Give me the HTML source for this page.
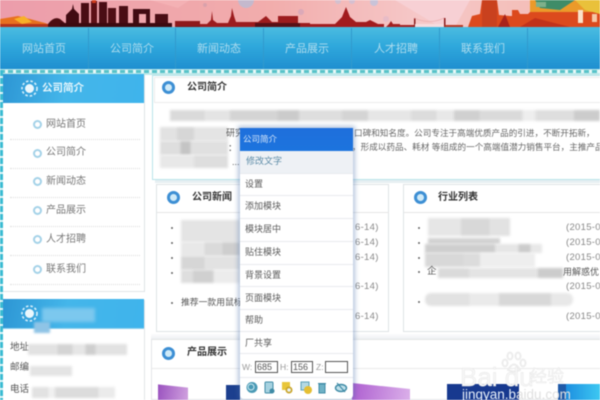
<!DOCTYPE html>
<html><head><meta charset="utf-8">
<style>
html,body{margin:0;padding:0;background:#fff}
#r{position:relative;width:600px;height:400px;overflow:hidden;background:#fff;font-family:"Liberation Sans","Noto Sans CJK SC",sans-serif;filter:blur(.65px)}
#r div,#r span{position:absolute;white-space:nowrap}
.nav{top:42px;font-size:11px;line-height:14px;color:#aedcee}
.sep{top:28px;width:1px;height:41px;background:#3199cc}
.li{left:46px;font-size:10px;line-height:12px;color:#777}
.dot{width:9px;height:9px;border-radius:50%;background:#fff;border:2px solid #a4d2e8;box-sizing:border-box;left:33px}
.ln{left:10px;width:130px;height:0;border-top:1px dotted #ddd}
.box{background:#fff;border:1px solid #dfe3e5;box-sizing:border-box}
.ic{width:13px;height:13px;border-radius:50%;background:#cfeaf8;border:3.5px solid #3d8fd4;box-sizing:border-box}
.t{font-size:10px;font-weight:bold;color:#333;line-height:12px}
.g{background:#d8d8d8;filter:blur(1.4px)}
.d{width:2px;height:2px;background:#666;border-radius:50%}
.date{font-size:9.5px;color:#888;line-height:12px;letter-spacing:.3px}
.tx{font-size:9.5px;color:#555;line-height:12px}
.m{left:245px;font-size:9px;line-height:11px;color:#5a5a5a}
.hr{left:240px;width:113px;height:1px;background:#e8ebee}
.inp{height:12px;border:1px solid #555;box-sizing:border-box;background:#fff;font-size:9px;line-height:10px;color:#555;top:361px;padding-left:1px}
</style></head><body>
<div id="r">
<svg style="position:absolute;left:0;top:0" width="600" height="29" viewBox="0 0 600 29">
<defs><linearGradient id="b" x1="0" x2="1" y1="0" y2="0"><stop offset="0" stop-color="#ec9dab"/><stop offset=".45" stop-color="#f2adac"/><stop offset=".7" stop-color="#f6c8c8"/><stop offset="1" stop-color="#f3b9b0"/></linearGradient></defs>
<rect width="600" height="29" fill="url(#b)"/>
<polygon points="150,0 190,0 178,8" fill="#f4b1b4"/>
<polygon points="395,0 470,0 455,27 440,27" fill="#f7d0d4"/>
<polygon points="0,27 0,19 18,16 30,19 45,23 55,27" fill="#e8701f"/>
<polygon points="14,19 24,16 32,22 22,24" fill="#f8b027"/>
<polygon points="0,24 50,24 62,27 0,27" fill="#b5341c"/>
<path d="M48,24 Q54,16 60,19 L66,24 L66,27 L48,27Z" fill="#4d0d12"/>
<path d="M66,15 L72,9 L73,4 L74,9 L79,14 L79,27 L66,27Z" fill="#420b12"/>
<rect x="81" y="3" width="8" height="24" fill="#4a0d14"/>
<rect x="91" y="1" width="6" height="26" fill="#5c1016"/><rect x="92" y="0" width="4" height="3" fill="#d23d1f"/>
<rect x="99" y="2" width="8" height="25" fill="#4a0d14"/>
<rect x="108" y="8" width="8" height="19" fill="#500e14"/>
<rect x="119" y="6" width="9" height="21" fill="#4a0d14"/>
<path d="M133,9 H150 V27 H146 V14 H139 V27 H133Z" fill="#420b12"/>
<rect x="155" y="14" width="13" height="13" fill="#4a0d14"/>
<rect x="60" y="23" width="112" height="4" fill="#3d0a10"/>
<path d="M175,21 H200 V27 H175Z" fill="#8e1a1c"/>
<path d="M176,26 H300 V27 H176Z" fill="#7a1518"/>
<path d="M200,24 H207 L211,20 L212,11 L213,20 L217,23 H228 L231,16 L232,8 L234,16 L236,22 H258 L266,16 L272,22 H278 V16 H298 V23 H310 V27 H200Z" fill="#9c1c1e"/>
<path d="M255,23 H300 V27 H255Z" fill="#581016"/>
<path d="M310,24 H335 L342,17 L346,7 L350,17 L356,22 H366 L370,20 L378,24 H384 V27 H310Z" fill="#a21c1e"/>
<path d="M389,24 L391,21 L393,24 H400 V27 H386Z" fill="#a32020"/>
<rect x="414" y="18" width="1.5" height="9" fill="#8a1b1b"/><rect x="444" y="18" width="1.5" height="9" fill="#8a1b1b"/>
<rect x="400" y="25" width="14" height="2" fill="#a32020"/><rect x="445" y="25" width="18" height="2" fill="#b93a24"/>
<path d="M414,18 Q430,25 444,18" fill="none" stroke="#e9a3a3" stroke-width=".6"/>
<path d="M415,24 H444 V27 H415Z" fill="#f7dcdf"/>
<path d="M468,27 L472,16 L480,14 L482,0 H497 L499,15 L510,16 H512 V10 L518,10 L520,14 H528 L534,8 L600,0 V27Z" fill="#dc4a1d"/>
<rect x="482" y="0" width="15" height="27" fill="#c9411e"/>
<rect x="530" y="0" width="70" height="12" fill="#eb9a2a"/>
<polygon points="535,0 575,0 560,10 540,8" fill="#3f8c68"/>
<polygon points="575,0 600,0 600,14 585,10" fill="#e9c13b"/>
<rect x="536" y="2" width="10" height="5" fill="#7db08a"/>
<rect x="578" y="10" width="5" height="13" fill="#fbe1c9"/><rect x="592" y="14" width="5" height="8" fill="#f6c7a5"/>
<path d="M505,14 L510,27 L498,27Z" fill="#a8231b"/><path d="M535,18 L570,27 L520,27Z" fill="#c1321a"/>
<circle cx="246" cy="0" r="8" fill="#b9bdd6" opacity=".8"/><circle cx="374" cy="2" r="4" fill="#c9c3d8"/><circle cx="352" cy="1" r="3" fill="#d6bfd0"/><circle cx="338" cy="1" r="3" fill="#d3c0cf"/><circle cx="301" cy="12" r="3" fill="#dca9b8"/><circle cx="205" cy="5" r="2" fill="#d9a1ab"/><circle cx="386" cy="19" r="3" fill="#e7bcc7"/>
</svg>
<div style="left:0;top:27px;width:600px;height:42px;background:linear-gradient(#4bbce0,#2fa8dc 45%,#1f8fd0)"></div>
<div class="sep" style="left:88px"></div><div class="sep" style="left:175px"></div><div class="sep" style="left:263px"></div><div class="sep" style="left:351px"></div><div class="sep" style="left:439px"></div><div class="sep" style="left:527px"></div>
<div class="nav" style="left:22px">网站首页</div><div class="nav" style="left:110px">公司简介</div><div class="nav" style="left:197px">新闻动态</div><div class="nav" style="left:285px">产品展示</div><div class="nav" style="left:374px">人才招聘</div><div class="nav" style="left:461px">联系我们</div>
<div style="left:0;top:69px;width:600px;height:6px;background:#bfe9ea"></div>
<div style="left:0;top:70px;width:600px;height:3px;background:repeating-linear-gradient(90deg,#58c3c9 0 5px,#e8f8f8 5px 8px)"></div>
<div style="left:0;top:70px;width:3px;height:330px;background:repeating-linear-gradient(#3abbd2 0 6px,#dff4f6 6px 8px)"></div>
<div style="left:3px;top:75px;width:141px;height:288px;background:#fff"></div>
<div style="left:144px;top:75px;width:1px;height:217px;background:#dfe3e5"></div>
<div style="left:3px;top:74px;width:141px;height:29px;background:linear-gradient(100deg,#2d96d4,#44b6ea 45%,#3fb4ec)"></div>
<svg style="position:absolute;left:20px;top:79px" width="19" height="19" viewBox="0 0 19 19"><circle cx="9.5" cy="9.5" r="4.5" fill="#eaf7fd"/><circle cx="9.5" cy="9.5" r="7.5" fill="none" stroke="#d8f0fb" stroke-width="1.6" stroke-dasharray="2.5 2"/></svg>
<div style="left:42px;top:81px;font-size:10.5px;line-height:14px;font-weight:bold;color:#e6f6fc">公司简介</div>
<div class="dot" style="top:120px"></div><div class="li" style="top:119px">网站首页</div>
<div class="ln" style="top:139px"></div>
<div class="dot" style="top:149px"></div><div class="li" style="top:147px">公司简介</div>
<div class="ln" style="top:168px"></div>
<div class="dot" style="top:177px"></div><div class="li" style="top:176px">新闻动态</div>
<div class="ln" style="top:197px"></div>
<div class="dot" style="top:206px"></div><div class="li" style="top:205px">产品展示</div>
<div class="ln" style="top:226px"></div>
<div class="dot" style="top:235px"></div><div class="li" style="top:234px">人才招聘</div>
<div class="ln" style="top:255px"></div>
<div class="dot" style="top:265px"></div><div class="li" style="top:264px">联系我们</div>
<div class="ln" style="top:284px"></div>
<div style="left:3px;top:291px;width:141px;height:1px;background:#e2e5e7"></div>
<div style="left:3px;top:299px;width:141px;height:29px;background:linear-gradient(100deg,#2d96d4,#44b6ea 45%,#3fb4ec);border-bottom:1px solid #8fd0ee"></div>
<svg style="position:absolute;left:20px;top:304px" width="19" height="19" viewBox="0 0 19 19"><circle cx="9.5" cy="9.5" r="4.5" fill="#eaf7fd"/><circle cx="9.5" cy="9.5" r="7.5" fill="none" stroke="#d8f0fb" stroke-width="1.6" stroke-dasharray="2.5 2"/></svg>
<div style="left:42px;top:308px;width:53px;height:14px;background:#7cc8ee;filter:blur(1.5px)"></div>
<div style="left:34px;top:322px;width:16px;height:11px;background:#8fc4e6;filter:blur(1px)"></div>
<div style="left:144px;top:300px;width:1px;height:100px;background:#e2e5e7"></div>
<div class="tx" style="left:10px;top:342px">地址</div><div class="g" style="left:28px;top:344px;width:99px;height:11px;background:linear-gradient(90deg,#e2e2e2 0 30%,#d4d4d4 30% 45%,#e6e6e6 45% 58%,#cecece 58% 68%,#e2e2e2 68%)"></div>
<div class="tx" style="left:10px;top:362px">邮编</div><div class="g" style="left:30px;top:366px;width:42px;height:10px;background:#e4e4e4"></div>
<div class="tx" style="left:10px;top:384px">电话</div><div class="g" style="left:32px;top:387px;width:83px;height:11px;background:linear-gradient(90deg,#e2e2e2 0 20%,#f0f0f0 20% 28%,#dcdcdc 28% 80%,#ebebeb 80%)"></div>
<div style="left:152px;top:75px;width:448px;height:105px;background:#fff;border:1px solid #b9e4ea;border-right:0;box-sizing:border-box"></div>
<div style="left:154px;top:77px;width:446px;height:26px;border:1px solid #ececec;border-right:0;box-sizing:border-box;background:#fff"></div>
<div class="ic" style="left:162px;top:81px"></div>
<div class="t" style="left:187px;top:82px">公司简介</div>
<div class="g" style="left:170px;top:110px;width:430px;height:11px;background:linear-gradient(90deg,#dadada 0 8%,#e4e4e4 8% 14%,#d4d4d4 14% 25%,#cbcbcb 25% 30%,#dedede 30% 40%,#d4d4d4 40% 46%,#e6e6e6 46% 56%,#dcdcdc 56% 62%,#e8e8e8 62% 66%,#d0d0d0 66% 72%,#dadada 72% 82%,#eeeeee 82% 85%,#dedede 85% 94%,#cccccc 94%)"></div>
<div class="g" style="left:160px;top:127px;width:68px;height:14px;background:linear-gradient(90deg,#e2e2e2 0 25%,#d6d6d6 25% 50%,#e4e4e4 50%)"></div>
<div class="g" style="left:160px;top:141px;width:68px;height:14px;background:linear-gradient(90deg,#dedede 0 30%,#c4c4c4 30% 45%,#e0e0e0 45%)"></div>
<div class="g" style="left:160px;top:155px;width:68px;height:13px;background:linear-gradient(90deg,#e8e8e8 0 50%,#dedede 50%)"></div>
<div class="tx" style="left:226px;top:127px;font-size:9px">研究</div>
<div class="tx" style="left:228px;top:142px;font-size:9px">：</div>
<div class="tx" style="left:232px;top:156px;font-size:9px">...</div>
<div class="tx" style="left:354px;top:127px;font-size:8.6px;color:#666">口碑和知名度。公司专注于高端优质产品的引进，不断开拓新，</div>
<div class="tx" style="left:352px;top:141px;font-size:8.6px;color:#666">，形成以药品、耗材 等组成的一个高端值潜力销售平台，主推产品有</div>
<div style="left:155px;top:180px;width:445px;height:3px;background:#e6eff2"></div>
<div class="box" style="left:156px;top:184px;width:233px;height:148px"></div>
<div style="left:157px;top:212px;width:232px;height:1px;background:#e6e6e6"></div>
<div class="ic" style="left:167px;top:191px"></div>
<div class="t" style="left:192px;top:192px">公司新闻</div>
<div class="d" style="left:171px;top:227px"></div><div class="d" style="left:171px;top:242px"></div><div class="d" style="left:171px;top:257px"></div><div class="d" style="left:171px;top:272px"></div><div class="d" style="left:171px;top:302px"></div>
<div class="g" style="left:181px;top:220px;width:59px;height:22px;background:#e4e4e4"></div>
<div class="g" style="left:181px;top:242px;width:59px;height:14px;background:linear-gradient(90deg,#e8e8e8 0 40%,#dadada 40% 70%,#cecece 70%)"></div>
<div class="g" style="left:181px;top:256px;width:59px;height:14px;background:linear-gradient(90deg,#d6d6d6 0 40%,#e2e2e2 40%)"></div>
<div class="g" style="left:181px;top:270px;width:59px;height:13px;background:linear-gradient(90deg,#dedede 0 20%,#d0d0d0 20% 55%,#ececec 55%)"></div>
<div class="tx" style="left:181px;top:296px;font-size:8.8px">推荐一款用鼠标</div>
<div class="date" style="left:355px;top:222px">6-14)</div><div class="date" style="left:355px;top:237px">6-14)</div><div class="date" style="left:355px;top:252px">6-14)</div><div class="date" style="left:355px;top:281px">6-14)</div><div class="date" style="left:355px;top:311px">6-14)</div>
<div class="box" style="left:403px;top:184px;width:197px;height:148px;border-right:0"></div>
<div style="left:404px;top:212px;width:196px;height:1px;background:#e6e6e6"></div>
<div class="ic" style="left:414px;top:191px"></div>
<div class="t" style="left:438px;top:192px">行业列表</div>
<div class="d" style="left:418px;top:227px"></div><div class="d" style="left:418px;top:242px"></div><div class="d" style="left:418px;top:257px"></div><div class="d" style="left:418px;top:271px"></div><div class="d" style="left:418px;top:301px"></div>
<div class="g" style="left:428px;top:218px;width:82px;height:18px;background:linear-gradient(90deg,#e6e6e6 0 40%,#d8d8d8 40% 75%,#e2e2e2 75%)"></div>
<div class="g" style="left:428px;top:238px;width:72px;height:6px;background:#d2d2d2"></div>
<div class="g" style="left:425px;top:244px;width:117px;height:9px;background:linear-gradient(90deg,#cecece 0 60%,#e6e6e6 60% 80%,#cccccc 80% 90%,#e8e8e8 90%)"></div>
<div class="g" style="left:425px;top:253px;width:110px;height:14px;background:linear-gradient(90deg,#d8d8d8 0 35%,#dcdcdc 35% 50%,#eeeeee 50%)"></div>
<div class="tx" style="left:427px;top:266px">企</div>
<div class="g" style="left:438px;top:268px;width:125px;height:10px;background:linear-gradient(90deg,#dadada 0 25%,#e4e4e4 25% 80%,#cccccc 80%)"></div>
<div class="tx" style="left:563px;top:266px;font-size:9px">用解惑优</div>
<div class="g" style="left:425px;top:293px;width:148px;height:13px;background:linear-gradient(90deg,#e2e2e2 0 30%,#eaeaea 30% 50%,#d8d8d8 50% 85%,#e8e8e8 85%);border-radius:6px"></div>
<div class="date" style="left:566px;top:222px">(2015-0</div><div class="date" style="left:566px;top:237px">(2015-0</div><div class="date" style="left:566px;top:252px">(2015-0</div><div class="date" style="left:566px;top:281px">(2015-0</div><div class="date" style="left:566px;top:311px">(2015-0</div>
<div style="left:151px;top:333px;width:449px;height:6px;background:linear-gradient(#fff,#eef0f2)"></div>
<div style="left:151px;top:339px;width:449px;height:61px;background:#fff;border:1px solid #e4e6e8;border-right:0;box-sizing:border-box"></div>
<div style="left:152px;top:368px;width:448px;height:1px;background:#eaeaea"></div>
<div class="ic" style="left:162px;top:347px"></div>
<div class="t" style="left:187px;top:347px">产品展示</div>
<div style="left:158px;top:386px;width:30px;height:18px;background:linear-gradient(100deg,#9a52bf,#d2a4e0);transform:skewY(6deg)"></div>
<div style="left:226px;top:385px;width:14px;height:15px;background:#1c3f8e"></div>
<div style="left:352px;top:386px;width:58px;height:20px;background:linear-gradient(100deg,#ad5ed0,#dcb2ea);transform:skewY(6deg)"></div>
<div style="left:447px;top:384px;width:72px;height:16px;background:#17398f"></div>
<div style="left:558px;top:384px;width:8px;height:16px;background:#1f5aa8"></div>
<div style="left:566px;top:384px;width:34px;height:16px;background:linear-gradient(90deg,#1d8fe0,#3dc8f2)"></div>
<div style="left:462px;top:388px;font-size:13.5px;line-height:13px;color:#e8f0fa">jingyan.b<i style="font-style:normal;color:#e0e0e0">aidu.com</i></div>
<svg style="position:absolute;left:498px;top:350px" width="32" height="24" viewBox="0 0 32 24" fill="none" stroke="#ededed" stroke-width="2"><ellipse cx="7" cy="13" rx="2.5" ry="3.5"/><ellipse cx="12" cy="6" rx="2.5" ry="3.5"/><ellipse cx="20" cy="6" rx="2.5" ry="3.5"/><ellipse cx="25" cy="13" rx="2.5" ry="3.5"/><path d="M10,20 Q16,9 22,20 Q16,23 10,20Z"/></svg>
<div style="left:460px;top:365px;font-size:26px;line-height:24px;font-weight:normal;color:#f6f6f6;-webkit-text-stroke:.4px #e6e6e6">Bai du</div>
<div style="left:530px;top:368px;font-size:17px;line-height:18px;color:#f6f6f6;-webkit-text-stroke:.3px #e2e2e2">经验</div>
<div style="left:240px;top:128px;width:113px;height:271px;background:#fff;border-radius:0 0 4px 4px;box-shadow:0 0 5px 2px rgba(70,110,170,.4)"></div>
<div style="left:240px;top:128px;width:113px;height:23px;background:linear-gradient(#1f6fdc,#1c74de)"></div>
<div style="left:243px;top:134px;font-size:8.5px;line-height:11px;color:#d9e8fa">公司简介</div>
<div style="left:240px;top:151px;width:113px;height:22px;background:#eef1f5"></div>
<div class="m" style="left:246px;top:156px;color:#5b8aa6">修改文字</div>
<div class="hr" style="top:173px"></div>
<div class="m" style="top:179px">设置</div><div class="hr" style="top:195px"></div>
<div class="m" style="top:201px">添加模块</div><div class="hr" style="top:218px"></div>
<div class="m" style="top:224px">模块居中</div><div class="hr" style="top:241px"></div>
<div class="m" style="top:247px">贴住模块</div><div class="hr" style="top:264px"></div>
<div class="m" style="top:270px">背景设置</div><div class="hr" style="top:286px"></div>
<div class="m" style="top:293px">页面模块</div><div class="hr" style="top:309px"></div>
<div class="m" style="top:315px">帮助</div><div class="hr" style="top:331px"></div>
<div class="m" style="top:338px">厂共享</div><div class="hr" style="top:353px"></div>
<div style="left:242px;top:361px;font-size:8.5px;line-height:12px;color:#999">W:</div>
<div class="inp" style="left:255px;width:23px">685</div>
<div style="left:280px;top:361px;font-size:8.5px;line-height:12px;color:#999">H:</div>
<div class="inp" style="left:291px;width:22px">156</div>
<div style="left:316px;top:361px;font-size:8.5px;line-height:12px;color:#999">Z:</div>
<div class="inp" style="left:325px;width:23px"></div>
<div style="left:240px;top:377px;width:113px;height:1px;background:#e8ebee"></div>
<svg style="position:absolute;left:240px;top:379px" width="113" height="18" viewBox="0 0 113 18">
<circle cx="12" cy="8.5" r="5.5" fill="#4a9ab5"/><circle cx="11" cy="8" r="3" fill="none" stroke="#cdeaf2"/>
<rect x="25" y="3" width="8" height="11" rx="1" fill="#a6d2e0" stroke="#3f8ba6"/><circle cx="32" cy="12" r="2.5" fill="#3f8ba6"/>
<rect x="42" y="3" width="8" height="8" fill="#e8c63a"/><circle cx="49" cy="11" r="3.5" fill="#c9a52a"/><circle cx="49" cy="11" r="1.8" fill="#e9f3f6"/>
<rect x="61" y="3" width="8" height="8" fill="#b4d9e3" stroke="#5a9fb5"/><circle cx="68" cy="11" r="4" fill="#e5bf33"/>
<path d="M78,4.5 H86 M79,5 H85 V14 H79Z" fill="#6fb2c6" stroke="#3f8ba6"/>
<ellipse cx="101" cy="9" rx="5.5" ry="3.5" fill="#bfe0ea" stroke="#3f8ba6" stroke-width="1.4"/><path d="M97,4 L105,13" stroke="#3f8ba6" stroke-width="1.2"/>
</svg>
</div>
</body></html>
